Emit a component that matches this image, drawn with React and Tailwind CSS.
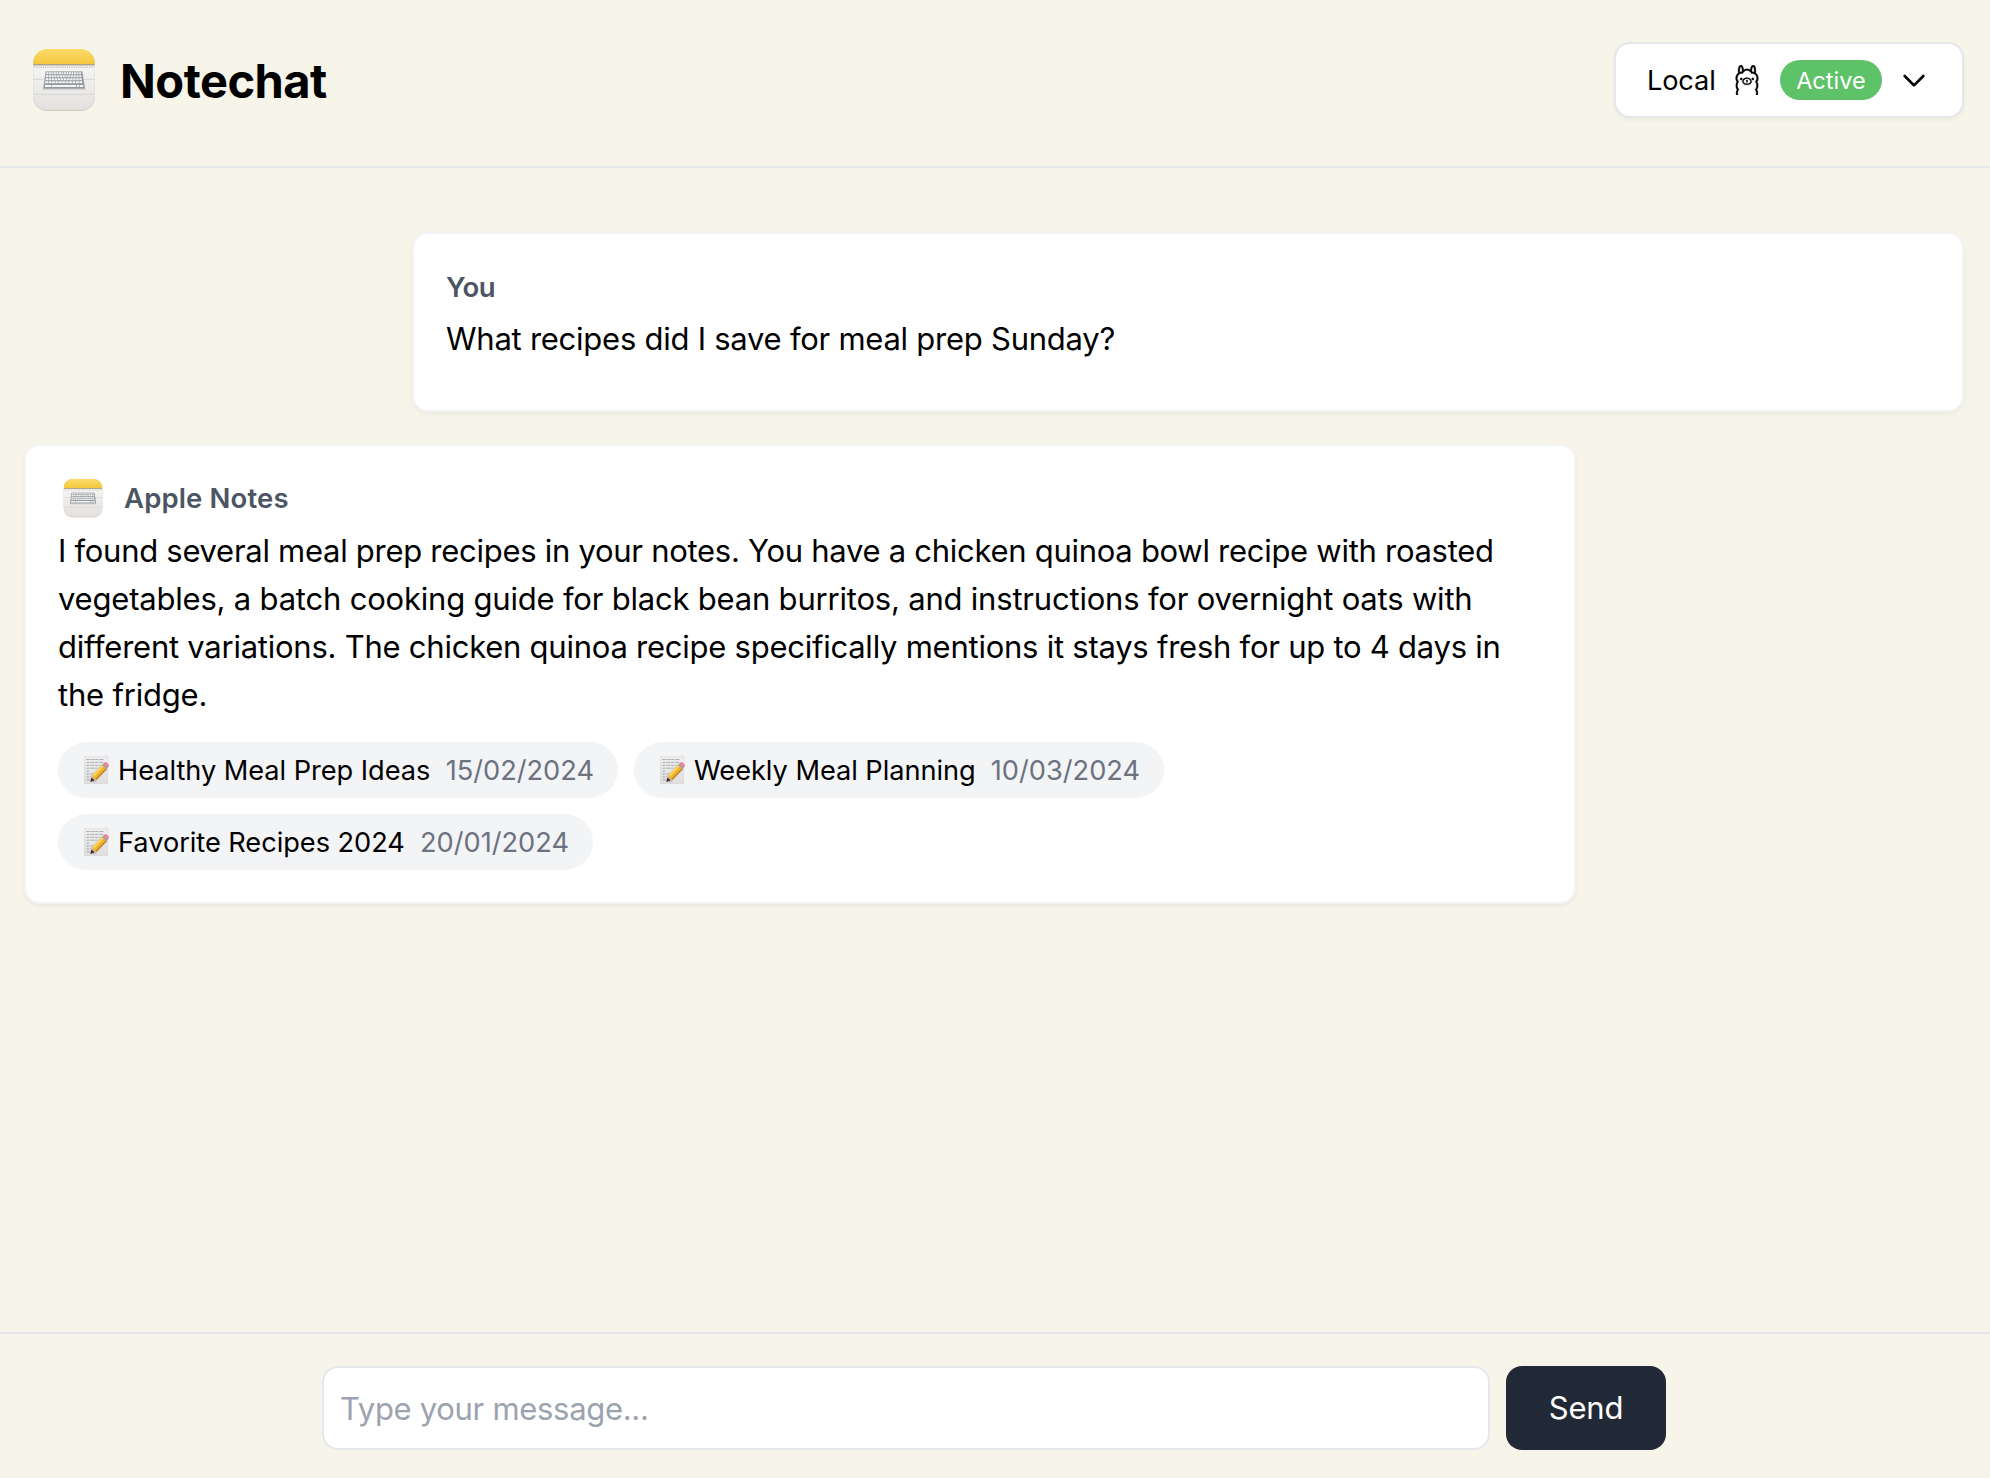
import { SiOllama } from "react-icons/si";

const KEY_ROWS = [
  { y: 32.4, x: 21.8, w: 36.4, keys: 14 },
  { y: 35.4, x: 21.4, w: 37.2, keys: 13 },
  { y: 38.4, x: 21, w: 38, keys: 12 },
  { y: 41.4, x: 20.6, w: 38.8, keys: 11 },
];

function NotesIcon({ id, className }) {
  return (
    <svg viewBox="0 0 80 80" className={className} aria-hidden="true">
      <defs>
        <linearGradient id={`${id}-top`} x1="0" y1="0" x2="0" y2="1">
          <stop offset="0" stopColor="#fbdd6c" />
          <stop offset="1" stopColor="#f5c63c" />
        </linearGradient>
        <linearGradient id={`${id}-body`} x1="0" y1="0" x2="0" y2="1">
          <stop offset="0" stopColor="#f7f6f6" />
          <stop offset="1" stopColor="#e3e0dc" />
        </linearGradient>
        <clipPath id={`${id}-clip`}>
          <rect x="9.3" y="9" width="61.4" height="61" rx="14" />
        </clipPath>
      </defs>
      <rect x="9" y="9.4" width="62" height="61.6" rx="14.2" fill="#cfccc3" />
      <g clipPath={`url(#${id}-clip)`}>
        <rect x="9" y="24" width="62" height="46.4" fill={`url(#${id}-body)`} />
        <rect x="9" y="9" width="62" height="15.2" fill={`url(#${id}-top)`} />
        <rect x="9" y="24" width="62" height="1.5" fill="#a9a387" />
        <path d="M10 27.2H70" stroke="#c4c2c0" strokeWidth="1.5" strokeDasharray="1.1 1.1" />
        <path d="M9 39.3H71M9 54.4H71" stroke="#d3d2d2" strokeWidth="0.9" />
      </g>
      <path d="M21.5 31.4H58.5L61.4 49.8H18.8Z" fill="#c8cacc" />
      <path d="M21.8 31.4H58.2L60.8 48.4H19.4Z" fill="#94989c" />
      {KEY_ROWS.map((r) => (
        <path
          key={r.y}
          d={`M${r.x + 0.6} ${r.y + 0.9}H${r.x + r.w - 0.6}`}
          stroke="#f4f5f6"
          strokeWidth="1.9"
          strokeDasharray={`${(r.w - 1.2) / r.keys - 0.6} 0.6`}
        />
      ))}
      <path d="M20.9 46H27.4M28 46H52M52.8 46H55.2M55.9 46H59.2" stroke="#f4f5f6" strokeWidth="2.2" />
    </svg>
  );
}

function MemoIcon() {
  return (
    <svg viewBox="0 0 28 30" className="mr-2 h-[30px] w-7 shrink-0" aria-hidden="true">
      <defs>
        <linearGradient id="memo-paper" x1="0" y1="0" x2="0" y2="1">
          <stop offset="0" stopColor="#eeeeef" />
          <stop offset="1" stopColor="#dededf" />
        </linearGradient>
      </defs>
      <rect x="2.2" y="1.2" width="23.6" height="27.6" fill="url(#memo-paper)" stroke="#d6d7d8" strokeWidth="0.5" />
      <path
        d="M4.5 4.5H22M4.5 7.4H22.5M4.5 10.3H20M4.5 13.2H18M4.5 16.1H7M4.5 19H13M4.5 21.9H10M4.5 24.8H9"
        stroke="#a2a4a7"
        strokeWidth="0.9"
        strokeDasharray="2.4 0.7 1.2 0.6 3 0.8"
      />
      <path d="M11.5 27 25 13.6" stroke="#b9babc" strokeWidth="2" />
      <path d="M9.2 25.8 10.2 20.3 20.4 9.4 25 13.6 14.6 24.7Z" fill="#f0b22b" />
      <path d="M11.3 21.4 21.2 10.6" stroke="#fbd764" strokeWidth="1.7" />
      <path d="M14 24.4 24.4 13.4" stroke="#c47f12" strokeWidth="1.2" />
      <path d="M10.2 20.5 14.4 24.5 9.2 25.8Z" fill="#d9b078" />
      <path d="M9.7 23.2 12 25.2 8.8 26.4Z" fill="#35383c" stroke="#35383c" strokeWidth="1" />
      <path d="M20 10 21.6 8.4 26 12.5 24.4 14.1Z" fill="#98a3b0" />
      <path d="M21.3 8.7 22.5 7.5Q23.8 6.6 25.4 8L26.6 9.2Q27.5 10.6 26.4 11.9L25.4 12.9Z" fill="#ec8791" />
    </svg>
  );
}

const SOURCES = [
  { title: "Healthy Meal Prep Ideas", date: "15/02/2024", width: "w-[560px]" },
  { title: "Weekly Meal Planning", date: "10/03/2024", width: "w-[530px]" },
  { title: "Favorite Recipes 2024", date: "20/01/2024", width: "w-[535px]" },
];

function Source({ title, date, width }) {
  return (
    <div className={`flex h-14 items-center rounded-full bg-[#f3f4f6] pr-6 pl-6 text-[27.2px] leading-10 whitespace-nowrap ${width}`}>
      <MemoIcon />
      <span className="translate-y-px tracking-[-0.04px]">{title}</span>
      <span className="ml-auto translate-y-px text-[#6b7280]">{date}</span>
    </div>
  );
}

const CARD = "w-[1552px] rounded-2xl border-2 border-[#f3f4f6] bg-white p-8 shadow-[0_2px_4px_rgba(0,0,0,0.05)]";

export default function App() {
  return (
    <div className="flex h-[1478px] w-[1990px] flex-col overflow-hidden bg-[#f7f4e9] font-['Inter',sans-serif] text-black">
      <header className="flex h-[168px] shrink-0 items-start justify-between border-b-2 border-[#e5e7eb] pt-[42px] pr-[26px] pl-6">
        <div className="flex h-19 items-center gap-4">
          <NotesIcon id="brand" className="size-20 shrink-0" />
          <h1 className="text-[47px] leading-none font-bold tracking-[-0.5px]">Notechat</h1>
        </div>
        <button className="flex h-19 w-[350px] items-center justify-between rounded-2xl border-2 border-[#e5e7eb] bg-white px-8 shadow-[0_2px_4px_rgba(0,0,0,0.05)]">
          <span className="-ml-px translate-y-px text-[27.2px] leading-10 tracking-[-0.15px]">Local</span>
          <span className="flex size-8 items-center justify-center">
            <SiOllama className="mr-px size-[30px]" strokeWidth="0.25" />
          </span>
          <span className="flex h-10 w-[102px] items-center justify-center rounded-full bg-[#5ec269] text-[23.5px] text-white">
            <span className="translate-y-px">Active</span>
          </span>
          <svg viewBox="0 0 24 24" className="size-8" fill="none" stroke="currentColor" strokeWidth="2" strokeLinecap="round" strokeLinejoin="round">
            <path d="M19 9l-7 7-7-7" />
          </svg>
        </button>
      </header>

      <main className="flex grow flex-col gap-8 pt-16 pr-[26px] pl-6">
        <section className={`h-[180px] self-end ${CARD}`}>
          <h2 className="mb-2 translate-y-px text-[27.5px] leading-10 font-semibold tracking-[-0.4px] text-[#4b5563]">You</h2>
          <p className="translate-y-px text-[31px] leading-12 tracking-[-0.25px]">What recipes did I save for meal prep Sunday?</p>
        </section>

        <section className={`h-[460px] ${CARD}`}>
          <div className="mb-2 flex h-10 items-center gap-4">
            <NotesIcon id="reply" className="-my-[5px] size-[50px] shrink-0" />
            <h2 className="text-[27.5px] leading-10 font-semibold tracking-[0.14px] text-[#4b5563]">Apple Notes</h2>
          </div>
          <p className="mb-6 translate-y-px text-[31px] leading-12 whitespace-nowrap">
            <span className="block tracking-[-0.28px]">
              I found several meal prep recipes in your notes. You have a chicken quinoa bowl recipe with roasted
            </span>
            <span className="block tracking-[-0.2px]">
              vegetables, a batch cooking guide for black bean burritos, and instructions for overnight oats with
            </span>
            <span className="block tracking-[-0.245px]">
              different variations. The chicken quinoa recipe specifically mentions it stays fresh for up to 4 days in
            </span>
            <span className="block tracking-[-0.2px]">the fridge.</span>
          </p>
          <div className="flex flex-wrap gap-4">
            {SOURCES.map((s) => (
              <Source key={s.title} {...s} />
            ))}
          </div>
        </section>
      </main>

      <footer className="h-[146px] shrink-0 border-t-2 border-[#e5e7eb] pt-8 pr-[2px]">
        <form className="flex justify-center gap-4">
          <input
            placeholder="Type your message..."
            className="h-[84px] w-[1168px] rounded-2xl border-2 border-[#e5e7eb] bg-white px-4 text-[31px] tracking-[-0.3px] placeholder:text-[#9ca3af]"
          />
          <button type="button" className="h-[84px] w-40 rounded-2xl bg-[#222936] pt-px text-[31px] tracking-[-0.15px] text-white">
            Send
          </button>
        </form>
      </footer>
    </div>
  );
}
